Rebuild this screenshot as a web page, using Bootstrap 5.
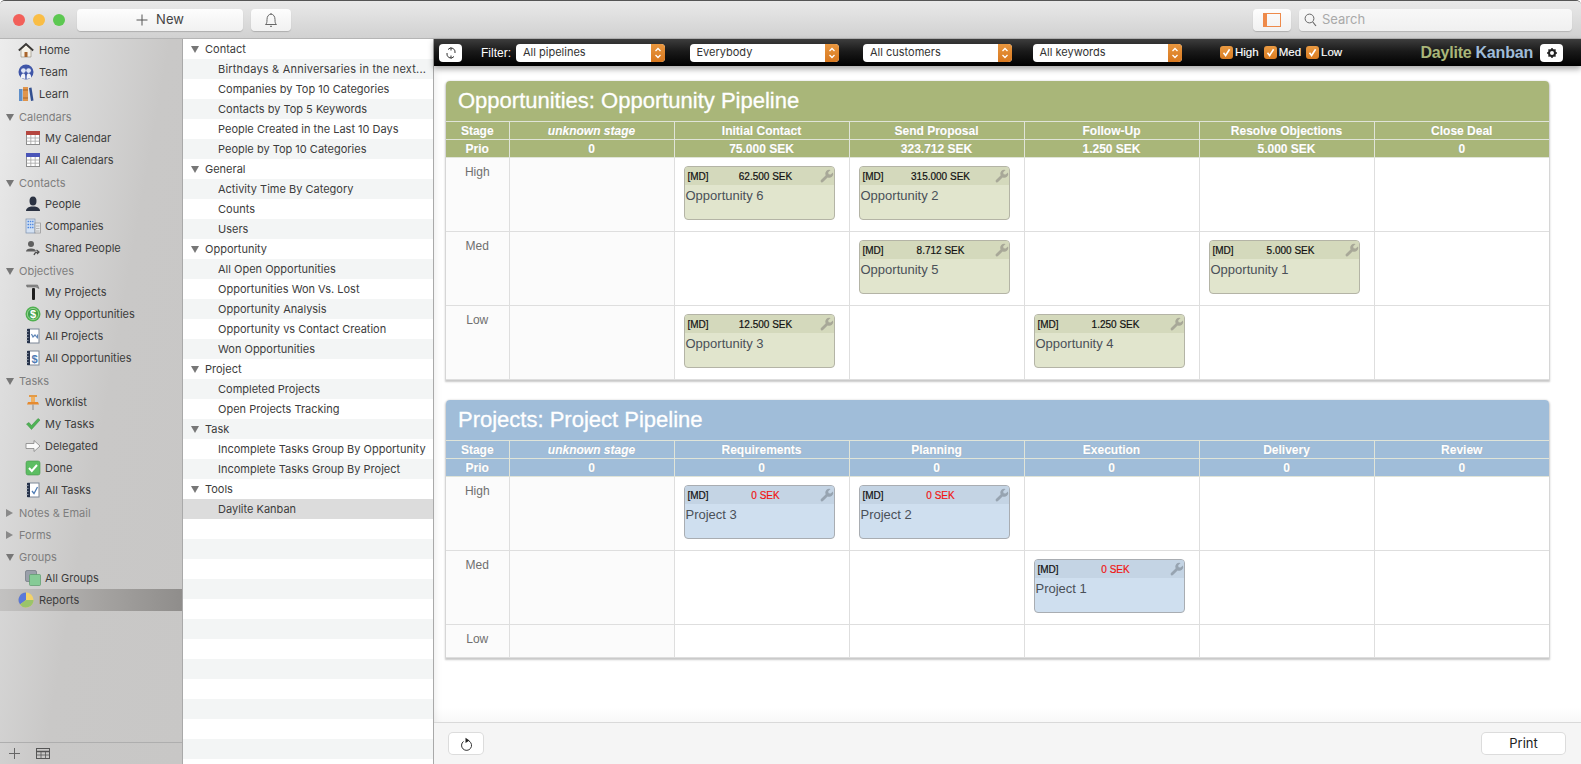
<!DOCTYPE html>
<html lang="en">
<head>
    <meta charset="UTF-8">
    <meta name="viewport" content="width=device-width, initial-scale=1.0">
    <title>Daylite Kanban</title>
    <link href="https://cdn.jsdelivr.net/npm/bootstrap@5.3.0/dist/css/bootstrap.min.css" rel="stylesheet">
    <style>
        html, body { height: 100%; overflow: hidden; background: #fff; }
        body { font-family: Inter, "Noto Sans", sans-serif; font-size: 11px; color: #3c3c3c; }
        .app-window { height: 764px; border-top: 1px solid #555; border-radius: 5px 5px 0 0; overflow: hidden; }
        .main-split { min-height: 0; }
        .main-panel { min-width: 0; }

        /* title bar */
        .title-bar { height: 38px; padding: 8px 9px 0 13px; background: linear-gradient(#e9e9e9, #d1d1d1); border-bottom: 1px solid #b5b5b5; }
        .lights { height: 22px; }
        .light { width: 12px; height: 12px; border-radius: 50%; margin-right: 8px; }
        .light-red { background: #f2605a; }
        .light-yellow { background: #f9bd45; }
        .light-green { background: #5cc851; }
        .mac-btn { height: 22px; background: linear-gradient(#fdfdfd, #f1f1f1); border: 0; border-radius: 4px; box-shadow: 0 1px 1px rgba(0,0,0,.18); color: #444; padding: 0; }
        .new-btn { width: 166px; margin-left: 0; font-size: 13px; gap: 8px; }
        .bell-btn { width: 40px; margin-left: 8px; }
        .panel-btn { width: 38px; }
        .search-box { width: 273px; margin-left: 8px; height: 22px; background: linear-gradient(#f8f8f8, #f0f0f0); border-radius: 4px; box-shadow: 0 1px 1px rgba(0,0,0,.15); padding-left: 5px; color: #a9a9a9; font-size: 13px; gap: 5px; }

        /* source list */
        .side-nav { width: 183px; border-right: 1px solid #a9a9a9; background: linear-gradient(100deg, #ededed 0%, #dcdcdc 22%, #c9c8c7 55%, #c8c7c6 100%); }
        .nav-row { height: 22px; gap: 5px; }
        .nav-top { padding-left: 18px; }
        .nav-sub { padding-left: 25px; gap: 4px; }
        .nav-row svg { width: 16px; height: 16px; flex: none; }
        .nav-head { height: 22px; padding: 2px 0 0 6px; gap: 5px; color: #7e7e7e; }
        .nav-picked { background: linear-gradient(90deg, #c3c2c1, #a5a3a1 55%, #8f8d8b); }
        .tri-down { width: 0; height: 0; border-left: 4px solid transparent; border-right: 4px solid transparent; border-top: 7px solid #777; flex: none; }
        .tri-right { width: 0; height: 0; border-top: 4px solid transparent; border-bottom: 4px solid transparent; border-left: 7px solid #8a8a8a; margin-right: 1px; flex: none; }
        .nav-foot { height: 22px; border-top: 1px solid #aeaeae; padding-left: 9px; gap: 16px; }

        /* report list */
        .report-list { width: 251px; border-right: 1px solid #a9a9a9; background: repeating-linear-gradient(#fff 0, #fff 20px, #f3f5f5 20px, #f3f5f5 40px); }
        .rep-row { height: 20px; padding-left: 35px; padding-top: 1px; white-space: nowrap; }
        .rep-long { letter-spacing: .2px; }
        .rep-head { padding-left: 8px; gap: 6px; }
        .rep-picked { background: #dcdcdc; }

        /* kanban panel */
        .filter-bar { height: 27px; padding-left: 5px; padding-right: 18px; background: linear-gradient(#3d3d3d, #1a1a1a 45%, #000); color: #fff; font-family: "Liberation Sans", sans-serif; font-size: 12px; position: relative; z-index: 1; box-shadow: 0 3px 6px rgba(0,0,0,.35); }
        .bar-btn { width: 23px; height: 18px; background: #fff; border-radius: 4px; }
        .filter-label { margin-left: 19px; margin-right: 7px; width: 28px; }
        .fake-select { width: 149px; height: 18px; background: #fff; color: #333; border-radius: 4px; overflow: hidden; padding-left: 7px; margin-right: 24.5px; font-family: Inter, sans-serif; font-size: 11px; }
        .fake-select.select-near { margin-right: 20.5px; }
        .select-arrow { width: 14px; height: 18px; background: linear-gradient(#e9973f, #d8781f); }
        .tick-boxes { margin-left: 14px; font-size: 11.5px; -webkit-text-stroke: .15px #fff; }
        .tick-box { width: 13px; height: 13px; border-radius: 3px; background: linear-gradient(#ea9a42, #d97c22); margin-right: 2px; }
        .tick-item { margin-right: 5px; }
        .brand { font-size: 16px; font-weight: 700; margin-right: 7px; gap: 4px; letter-spacing: -.2px; }
        .brand-green { color: #a9b679; }
        .brand-blue { color: #9fbcd8; }
        .board-area { padding: 15px 32px 0 12px; background: linear-gradient(#fff calc(100% - 14px), #f8f8f8); box-shadow: inset 8px 0 8px -8px rgba(0,0,0,.1); }
        .board { margin-bottom: 20px; border-radius: 4px 4px 0 0; box-shadow: 0 1px 2px 1px rgba(0,0,0,.22); font-family: "Liberation Sans", sans-serif; background: #fff; }
        .board-title { height: 40px; padding-left: 12px; color: #fff; font-size: 22px; font-weight: 400; border-radius: 4px 4px 0 0; margin: 0; line-height: 39px; -webkit-text-stroke: .3px #fff; }
        .board-green .board-title, .board-green th { background: #a9b679; }
        .board-blue .board-title, .board-blue th { background: #a0bdd9; }
        .kanban { table-layout: fixed; margin: 0; border-color: #dedede; }
        .col-stage { width: 63px; }
        .col-unknown { width: 165px; }
        .kanban th { height: 18px; padding: 1px 0 0; text-align: center; font-size: 12px; line-height: 15px; color: #fff; border: 1px solid #e0e4d8; -webkit-text-stroke: .2px #fff; text-shadow: 0 0 1px rgba(0,0,0,.25); }
        .kanban td { height: 74px; padding: 8px 8px 0 9px; vertical-align: top; border-color: #dedede; }
        .kanban td.prio { background: #fbfbfb; text-align: center; color: #6f6f6f; font-size: 12px; padding: 5px 0 0; }
        .kanban td.unknown { background: #fbfbfb; }
        .kanban tr:last-child td { border-bottom-width: 0; }
        .kanban tr.short-row td { height: 33px; }
        .kanban th:first-child, .kanban td:first-child { border-left: 0; }
        .kanban th:last-child, .kanban td:last-child { border-right: 0; }
        .deal { width: 151px; height: 54px; border: 1px solid #b4b4a6; border-radius: 4px; overflow: hidden; }
        .deal-top { display: grid; grid-template-columns: 31px 94px 1fr; align-items: center; height: 18px; padding: 0 0 0 3px; font-size: 10px; color: #111; -webkit-text-stroke: .2px; }
        .deal-top svg { justify-self: end; width: 14px; height: 14px; fill: #a8a898; }
        .deal-amount { text-align: center; }
        .deal-name { font-size: 13px; color: #4a5058; padding: 1px 0 0 1px; }
        .deal-green { background: #e1e5cd; }
        .deal-green .deal-top { background: #d4d9bc; }
        .deal-blue { background: #cfdfef; border-color: #a9adb2; }
        .deal-blue .deal-top { background: #c4d4e4; }
        .deal-blue .deal-top svg { fill: #97a4b1; }
        .zero-amount { color: #f01414; }
        .bottom-bar { height: 42px; background: #f5f5f5; border-top: 1px solid #d9d9d9; padding: 10px 16px 0 15px; }
        .reload-btn { width: 34px; height: 21px; background: #fff; border-radius: 4px; box-shadow: 0 0 0 1px #dcdcdc; border: 0; padding: 0; }
        .print-btn { width: 83px; height: 21px; background: #fff; border-radius: 4px; box-shadow: 0 0 0 1px #dcdcdc; border: 0; padding: 0; font-size: 13px; color: #222; }
    </style>
</head>
<body>
    <svg width="0" height="0" class="d-none" aria-hidden="true">
        <symbol id="i-wrench" viewBox="0 0 14 14"><path d="M13 3.4 10.6 5.6 8.6 5.2 8.2 3.2 10.6 1A4 4 0 0 0 5.6 6.4L1 11A1.4 1.4 0 0 0 3 13L7.6 8.4A4 4 0 0 0 13 3.4Z"/></symbol>
        <symbol id="i-chev" viewBox="0 0 14 18"><path d="M4.5 7 7 4.5 9.5 7M4.5 11 7 13.5 9.5 11" fill="none" stroke="#fff" stroke-width="1.3"/></symbol>
        <symbol id="i-tick" viewBox="0 0 13 13"><path d="M3.5 6.8 5.6 9.5 9.6 3.2" fill="none" stroke="#fff" stroke-width="1.6"/></symbol>
        <symbol id="i-cal" viewBox="0 0 16 16"><rect x="1.5" y="1.5" width="13" height="13" fill="#fff" stroke="#8d8d8d"/><path d="M1.5 8h13M1.5 11.2h13M5.8 5v9M10.2 5v9" stroke="#a5a5a5" stroke-width=".8"/></symbol>
        <symbol id="i-book" viewBox="0 0 16 16"><rect x="3" y="1" width="11" height="14" fill="#fff" stroke="#7c8797"/><rect x="2" y="1" width="3" height="14" fill="#26324a"/><path d="M1.5 3.5h2M1.5 6.5h2M1.5 9.5h2M1.5 12.5h2" stroke="#9aa3b0" stroke-width=".8"/></symbol>
    </svg>

    <div class="app-window d-flex flex-column">
        <div class="title-bar d-flex flex-shrink-0">
            <div class="lights d-flex align-items-center align-self-start me-1">
                <span class="light light-red"></span><span class="light light-yellow"></span><span class="light light-green me-2"></span>
            </div>
            <button class="mac-btn new-btn d-flex align-items-center justify-content-center" type="button">
                <svg width="12" height="12" viewBox="0 0 12 12"><path d="M6 .5v11M.5 6h11" stroke="#555" stroke-width="1"/></svg>New
            </button>
            <button class="mac-btn bell-btn d-flex align-items-center justify-content-center" type="button" aria-label="Notifications">
                <svg width="14" height="16" viewBox="0 0 14 16"><path d="M1.5 12.5c1.2-1 1.5-2 1.5-5C3 4.5 4.5 2.2 7 2.2s4 2.3 4 5.3c0 3 .3 4 1.5 5Z" fill="none" stroke="#666"/><path d="M6 14.3h2M7 1v1" stroke="#666"/></svg>
            </button>
            <div class="ms-auto d-flex">
                <button class="mac-btn panel-btn d-flex align-items-center justify-content-center" type="button" aria-label="Toggle panel">
                    <svg width="18" height="14" viewBox="0 0 18 14"><rect x=".5" y=".5" width="17" height="13" fill="none" stroke="#ee8a4a"/><rect x="1" y="1" width="3" height="12" fill="#ee8a4a"/></svg>
                </button>
                <div class="search-box d-flex align-items-center">
                    <svg width="13" height="14" viewBox="0 0 13 14"><circle cx="5.5" cy="5.5" r="4.4" fill="none" stroke="#666"/><path d="m8.8 9 3.2 4" stroke="#666" stroke-width="1.2"/></svg>Search
                </div>
            </div>
        </div>

        <div class="main-split d-flex flex-grow-1">
            <nav class="side-nav d-flex flex-column flex-shrink-0">
                <div class="flex-grow-1">
                    <div class="nav-row nav-top d-flex align-items-center"><svg viewBox="0 0 16 16"><path d="M3 7.5V15h10V7.5L8 3Z" fill="#f4f1e8" stroke="#8c8373" stroke-width=".6"/><rect x="6.5" y="10" width="3" height="5" fill="#a9652b"/><path d="M.8 8.5 8 2l7.2 6.5" fill="none" stroke="#3c3a38" stroke-width="1.8"/></svg>Home</div>
                    <div class="nav-row nav-top d-flex align-items-center"><svg viewBox="0 0 16 16"><circle cx="8" cy="8" r="7.5" fill="#3f56a8"/><circle cx="5.4" cy="6.6" r="2.4" fill="#dfe6f5"/><circle cx="10.6" cy="6.6" r="2.4" fill="#dfe6f5"/><path d="M3 14c-.5-3 .8-4.500 2.400-4.500S7.500 11 7.300 15ZM8.700 15c-.2-4 .3-5.500 1.900-5.500s2.900 1.500 2.400 4.500Z" fill="#f1f3f8"/></svg>Team</div>
                    <div class="nav-row nav-top d-flex align-items-center"><svg viewBox="0 0 16 16"><rect x="1" y="3" width="3.500" height="12" fill="#5f8fc9"/><rect x="5" y="1" width="5" height="14" fill="#e0944a"/><path d="M5 4h5M5 12h5" stroke="#a8662a"/><path d="m11 2 2.500-.5L15.500 14.500 13 15Z" fill="#33508f"/></svg>Learn</div>

                    <div class="nav-head d-flex align-items-center"><span class="tri-down"></span>Calendars</div>
                    <div class="nav-row nav-sub d-flex align-items-center"><svg viewBox="0 0 16 16"><use href="#i-cal"/><rect x="1" y="1" width="14" height="4" fill="#b5463f"/></svg>My Calendar</div>
                    <div class="nav-row nav-sub d-flex align-items-center"><svg viewBox="0 0 16 16"><use href="#i-cal"/><rect x="1" y="1" width="14" height="4" fill="#4a55b8"/></svg>All Calendars</div>

                    <div class="nav-head d-flex align-items-center"><span class="tri-down"></span>Contacts</div>
                    <div class="nav-row nav-sub d-flex align-items-center"><svg viewBox="0 0 16 16"><ellipse cx="8" cy="5" rx="3.500" ry="4.500" fill="#2b3242"/><path d="M1 15c0-3 3-4 5-4.500h4c2 .5 5 1.500 5 4.500Z" fill="#2b3242"/></svg>People</div>
                    <div class="nav-row nav-sub d-flex align-items-center"><svg viewBox="0 0 16 16"><rect x="1" y="1" width="9" height="14" fill="#d3e1f3" stroke="#7c90ad" stroke-width=".7"/><rect x="10" y="5" width="5.500" height="10" fill="#e7e9ec" stroke="#8f8f8f" stroke-width=".7"/><path d="M2.500 3.500h6M2.500 6.500h6M2.500 9.500h6" stroke="#4c86e0" stroke-width="1.500" stroke-dasharray="1.500 .8"/><path d="M11 8h3.500M11 10.500h3.500M11 13h3.500" stroke="#a8a8a8" stroke-width=".8"/></svg>Companies</div>
                    <div class="nav-row nav-sub d-flex align-items-center"><svg viewBox="0 0 16 16"><circle cx="6" cy="4" r="3" fill="#5f5f5f"/><path d="M1 11.500c0-2 2-3 5-3s5 1 5 3Z" fill="#5f5f5f"/><path d="M9 15c.5-2 2-3 4-3M11.500 10l2.500 2-2 2" fill="none" stroke="#4c4c4c" stroke-width="1.200"/></svg>Shared People</div>

                    <div class="nav-head d-flex align-items-center"><span class="tri-down"></span>Objectives</div>
                    <div class="nav-row nav-sub d-flex align-items-center"><svg viewBox="0 0 16 16"><rect x="7" y="4" width="3" height="12" rx="1" fill="#1e1e1e"/><path d="M1.500 1h11l1.500 3.500-3-1.500H2Z" fill="#8f8f8f" stroke="#555" stroke-width=".5"/></svg>My Projects</div>
                    <div class="nav-row nav-sub d-flex align-items-center"><svg viewBox="0 0 16 16"><circle cx="8" cy="8" r="7.500" fill="#4fb04f"/><circle cx="8" cy="8" r="5.600" fill="#3f9f45" stroke="#c8eec4" stroke-width=".6"/><text x="8" y="12" text-anchor="middle" font-family="Liberation Sans" font-weight="700" font-size="11" fill="#fff">$</text></svg>My Opportunities</div>
                    <div class="nav-row nav-sub d-flex align-items-center"><svg viewBox="0 0 16 16"><use href="#i-book"/><path d="M6.500 6 8 9l2-2 2 2.500M12.500 6.500v4" fill="none" stroke="#5f86b8" stroke-width="1.200"/></svg>All Projects</div>
                    <div class="nav-row nav-sub d-flex align-items-center"><svg viewBox="0 0 16 16"><use href="#i-book"/><text x="9.500" y="12.500" text-anchor="middle" font-family="Liberation Sans" font-weight="700" font-size="11" fill="#4f7cb4">$</text></svg>All Opportunities</div>

                    <div class="nav-head d-flex align-items-center"><span class="tri-down"></span>Tasks</div>
                    <div class="nav-row nav-sub d-flex align-items-center"><svg viewBox="0 0 16 16"><rect x="4" y="1" width="8" height="2" fill="#e39a45"/><path d="M6 3h4v5H6Z" fill="#f0b060"/><path d="M3 8h10l1 2.500H2Z" fill="#e58a2f"/><path d="M8 10.500V16" stroke="#8a8a8a"/></svg>Worklist</div>
                    <div class="nav-row nav-sub d-flex align-items-center"><svg viewBox="0 0 16 16"><path d="m1.500 8 2.500-1.500 2.500 3L13 2.500 15 4l-8.500 9.500Z" fill="#4eb354" stroke="#3b8d41" stroke-width=".5"/></svg>My Tasks</div>
                    <div class="nav-row nav-sub d-flex align-items-center"><svg viewBox="0 0 16 16"><path d="M1 5.500h8V2.500L15 8l-6 5.500v-3H1Z" fill="#fafafa" stroke="#848484" stroke-width=".8"/></svg>Delegated</div>
                    <div class="nav-row nav-sub d-flex align-items-center"><svg viewBox="0 0 16 16"><rect x="1" y="1" width="14" height="14" rx="2" fill="#5cbd62" stroke="#47994c" stroke-width=".6"/><path d="m4 8 2.800 3L12 5" fill="none" stroke="#fff" stroke-width="2"/></svg>Done</div>
                    <div class="nav-row nav-sub d-flex align-items-center"><svg viewBox="0 0 16 16"><use href="#i-book"/><path d="m7 9 2 2.500L12.500 5" fill="none" stroke="#4f7cb4" stroke-width="1.300"/></svg>All Tasks</div>

                    <div class="nav-head d-flex align-items-center"><span class="tri-right"></span>Notes &amp; Email</div>
                    <div class="nav-head d-flex align-items-center"><span class="tri-right"></span>Forms</div>
                    <div class="nav-head d-flex align-items-center"><span class="tri-down"></span>Groups</div>
                    <div class="nav-row nav-sub d-flex align-items-center"><svg viewBox="0 0 16 16"><rect x=".5" y=".5" width="11" height="11" rx="1.500" fill="#9aa0aa" stroke="#6f7580" stroke-width=".7"/><rect x="4.500" y="4.500" width="11" height="11" rx="1" fill="#86cb96" stroke="#5c9a6c" stroke-width=".7"/></svg>All Groups</div>
                    <div class="nav-row nav-top nav-picked d-flex align-items-center"><svg viewBox="0 0 16 16"><circle cx="8" cy="8" r="7.500" fill="#f2d36a"/><path d="M8 8V.5A7.500 7.500 0 0 0 2 12.500Z" fill="#5a78d8"/><path d="M8 8 2 12.500A7.500 7.500 0 0 0 15.500 8Z" fill="#9ac46a"/></svg>Reports</div>
                </div>
                <div class="nav-foot d-flex align-items-center flex-shrink-0">
                    <svg width="11" height="11" viewBox="0 0 11 11"><path d="M5.500 0v11M0 5.500h11" stroke="#666"/></svg>
                    <svg width="14" height="11" viewBox="0 0 14 11"><rect x=".5" y=".5" width="13" height="10" fill="none" stroke="#555"/><path d="M.5 3.500h13" stroke="#555" stroke-width="1.500"/><path d="M.5 7h13M5 3.500v7M9.500 3.500v7" stroke="#555" stroke-width=".8"/></svg>
                </div>
            </nav>

            <div class="report-list flex-shrink-0">
                <div class="rep-row rep-head d-flex align-items-center"><span class="tri-down"></span>Contact</div>
                <div class="rep-row rep-long d-flex align-items-center">Birthdays &amp; Anniversaries in the next...</div>
                <div class="rep-row d-flex align-items-center">Companies by Top 10 Categories</div>
                <div class="rep-row d-flex align-items-center">Contacts by Top 5 Keywords</div>
                <div class="rep-row d-flex align-items-center">People Created in the Last 10 Days</div>
                <div class="rep-row d-flex align-items-center">People by Top 10 Categories</div>
                <div class="rep-row rep-head d-flex align-items-center"><span class="tri-down"></span>General</div>
                <div class="rep-row d-flex align-items-center">Activity Time By Category</div>
                <div class="rep-row d-flex align-items-center">Counts</div>
                <div class="rep-row d-flex align-items-center">Users</div>
                <div class="rep-row rep-head d-flex align-items-center"><span class="tri-down"></span>Opportunity</div>
                <div class="rep-row d-flex align-items-center">All Open Opportunities</div>
                <div class="rep-row d-flex align-items-center">Opportunities Won Vs. Lost</div>
                <div class="rep-row d-flex align-items-center">Opportunity Analysis</div>
                <div class="rep-row d-flex align-items-center">Opportunity vs Contact Creation</div>
                <div class="rep-row d-flex align-items-center">Won Opportunities</div>
                <div class="rep-row rep-head d-flex align-items-center"><span class="tri-down"></span>Project</div>
                <div class="rep-row d-flex align-items-center">Completed Projects</div>
                <div class="rep-row d-flex align-items-center">Open Projects Tracking</div>
                <div class="rep-row rep-head d-flex align-items-center"><span class="tri-down"></span>Task</div>
                <div class="rep-row d-flex align-items-center">Incomplete Tasks Group By Opportunity</div>
                <div class="rep-row d-flex align-items-center">Incomplete Tasks Group By Project</div>
                <div class="rep-row rep-head d-flex align-items-center"><span class="tri-down"></span>Tools</div>
                <div class="rep-row rep-picked d-flex align-items-center">Daylite Kanban</div>
            </div>

            <main class="main-panel d-flex flex-column flex-grow-1">
                <div class="filter-bar d-flex align-items-center flex-shrink-0">
                    <span class="bar-btn d-flex align-items-center justify-content-center">
                        <svg width="12" height="12" viewBox="0 0 12 12"><path d="M3 2.500A4 4 0 0 1 10 6M9 9.500A4 4 0 0 1 2 6M6 .5v3M6 8.500v3" fill="none" stroke="#333"/></svg>
                    </span>
                    <span class="filter-label">Filter:</span>
                    <div class="fake-select d-flex align-items-center justify-content-between">All pipelines<span class="select-arrow"><svg width="14" height="18"><use href="#i-chev"/></svg></span></div>
                    <div class="fake-select d-flex align-items-center justify-content-between">Everybody<span class="select-arrow"><svg width="14" height="18"><use href="#i-chev"/></svg></span></div>
                    <div class="fake-select select-near d-flex align-items-center justify-content-between">All customers<span class="select-arrow"><svg width="14" height="18"><use href="#i-chev"/></svg></span></div>
                    <div class="fake-select d-flex align-items-center justify-content-between">All keywords<span class="select-arrow"><svg width="14" height="18"><use href="#i-chev"/></svg></span></div>
                    <div class="tick-boxes d-flex align-items-center">
                        <span class="tick-box d-flex"><svg width="13" height="13"><use href="#i-tick"/></svg></span><span class="tick-item">High</span>
                        <span class="tick-box d-flex"><svg width="13" height="13"><use href="#i-tick"/></svg></span><span class="tick-item">Med</span>
                        <span class="tick-box d-flex"><svg width="13" height="13"><use href="#i-tick"/></svg></span><span>Low</span>
                    </div>
                    <div class="brand d-flex ms-auto"><span class="brand-green">Daylite</span><span class="brand-blue">Kanban</span></div>
                    <span class="bar-btn d-flex align-items-center justify-content-center">
                        <svg width="10" height="10" viewBox="0 0 10 10"><circle cx="5" cy="5" r="3" fill="none" stroke="#222" stroke-width="2"/><path d="M5 0v2M5 8v2M0 5h2M8 5h2M1.500 1.500 3 3M7 7l1.500 1.500M8.500 1.500 7 3M3 7 1.500 8.500" stroke="#222" stroke-width="1.500"/></svg>
                    </span>
                </div>

                <div class="board-area flex-grow-1">
                    <section class="board board-green">
                        <h2 class="board-title">Opportunities: Opportunity Pipeline</h2>
                        <table class="table table-bordered kanban">
                            <colgroup><col class="col-stage"><col class="col-unknown"><col><col><col><col><col></colgroup>
                            <thead>
                                <tr><th>Stage</th><th><em>unknown stage</em></th><th>Initial Contact</th><th>Send Proposal</th><th>Follow-Up</th><th>Resolve Objections</th><th>Close Deal</th></tr>
                                <tr><th>Prio</th><th>0</th><th>75.000 SEK</th><th>323.712 SEK</th><th>1.250 SEK</th><th>5.000 SEK</th><th>0</th></tr>
                            </thead>
                            <tbody>
                                <tr>
                                    <td class="prio">High</td><td class="unknown"></td>
                                    <td><div class="deal deal-green"><div class="deal-top"><span>[MD]</span><span class="deal-amount">62.500 SEK</span><svg><use href="#i-wrench"/></svg></div><div class="deal-name">Opportunity 6</div></div></td>
                                    <td><div class="deal deal-green"><div class="deal-top"><span>[MD]</span><span class="deal-amount">315.000 SEK</span><svg><use href="#i-wrench"/></svg></div><div class="deal-name">Opportunity 2</div></div></td>
                                    <td></td><td></td><td></td>
                                </tr>
                                <tr>
                                    <td class="prio">Med</td><td class="unknown"></td><td></td>
                                    <td><div class="deal deal-green"><div class="deal-top"><span>[MD]</span><span class="deal-amount">8.712 SEK</span><svg><use href="#i-wrench"/></svg></div><div class="deal-name">Opportunity 5</div></div></td>
                                    <td></td>
                                    <td><div class="deal deal-green"><div class="deal-top"><span>[MD]</span><span class="deal-amount">5.000 SEK</span><svg><use href="#i-wrench"/></svg></div><div class="deal-name">Opportunity 1</div></div></td>
                                    <td></td>
                                </tr>
                                <tr>
                                    <td class="prio">Low</td><td class="unknown"></td>
                                    <td><div class="deal deal-green"><div class="deal-top"><span>[MD]</span><span class="deal-amount">12.500 SEK</span><svg><use href="#i-wrench"/></svg></div><div class="deal-name">Opportunity 3</div></div></td>
                                    <td></td>
                                    <td><div class="deal deal-green"><div class="deal-top"><span>[MD]</span><span class="deal-amount">1.250 SEK</span><svg><use href="#i-wrench"/></svg></div><div class="deal-name">Opportunity 4</div></div></td>
                                    <td></td><td></td>
                                </tr>
                            </tbody>
                        </table>
                    </section>

                    <section class="board board-blue">
                        <h2 class="board-title">Projects: Project Pipeline</h2>
                        <table class="table table-bordered kanban">
                            <colgroup><col class="col-stage"><col class="col-unknown"><col><col><col><col><col></colgroup>
                            <thead>
                                <tr><th>Stage</th><th><em>unknown stage</em></th><th>Requirements</th><th>Planning</th><th>Execution</th><th>Delivery</th><th>Review</th></tr>
                                <tr><th>Prio</th><th>0</th><th>0</th><th>0</th><th>0</th><th>0</th><th>0</th></tr>
                            </thead>
                            <tbody>
                                <tr>
                                    <td class="prio">High</td><td class="unknown"></td>
                                    <td><div class="deal deal-blue"><div class="deal-top"><span>[MD]</span><span class="deal-amount zero-amount">0 SEK</span><svg><use href="#i-wrench"/></svg></div><div class="deal-name">Project 3</div></div></td>
                                    <td><div class="deal deal-blue"><div class="deal-top"><span>[MD]</span><span class="deal-amount zero-amount">0 SEK</span><svg><use href="#i-wrench"/></svg></div><div class="deal-name">Project 2</div></div></td>
                                    <td></td><td></td><td></td>
                                </tr>
                                <tr>
                                    <td class="prio">Med</td><td class="unknown"></td><td></td><td></td>
                                    <td><div class="deal deal-blue"><div class="deal-top"><span>[MD]</span><span class="deal-amount zero-amount">0 SEK</span><svg><use href="#i-wrench"/></svg></div><div class="deal-name">Project 1</div></div></td>
                                    <td></td><td></td>
                                </tr>
                                <tr class="short-row">
                                    <td class="prio">Low</td><td class="unknown"></td><td></td><td></td><td></td><td></td><td></td>
                                </tr>
                            </tbody>
                        </table>
                    </section>
                </div>

                <div class="bottom-bar d-flex justify-content-between flex-shrink-0">
                    <button class="reload-btn d-flex align-items-center justify-content-center" type="button" aria-label="Reload">
                        <svg width="13" height="14" viewBox="0 0 13 14"><path d="M8.500 3.200A5 5 0 1 1 3 3.600" fill="none" stroke="#333" transform="translate(.5 .8)"/><path d="M5.500 .8 9.500 3.500 5.500 6Z" fill="#222"/></svg>
                    </button>
                    <button class="print-btn" type="button">Print</button>
                </div>
            </main>
        </div>
    </div>
    <script src="https://cdn.jsdelivr.net/npm/bootstrap@5.3.0/dist/js/bootstrap.bundle.min.js"></script>
</body>
</html>
